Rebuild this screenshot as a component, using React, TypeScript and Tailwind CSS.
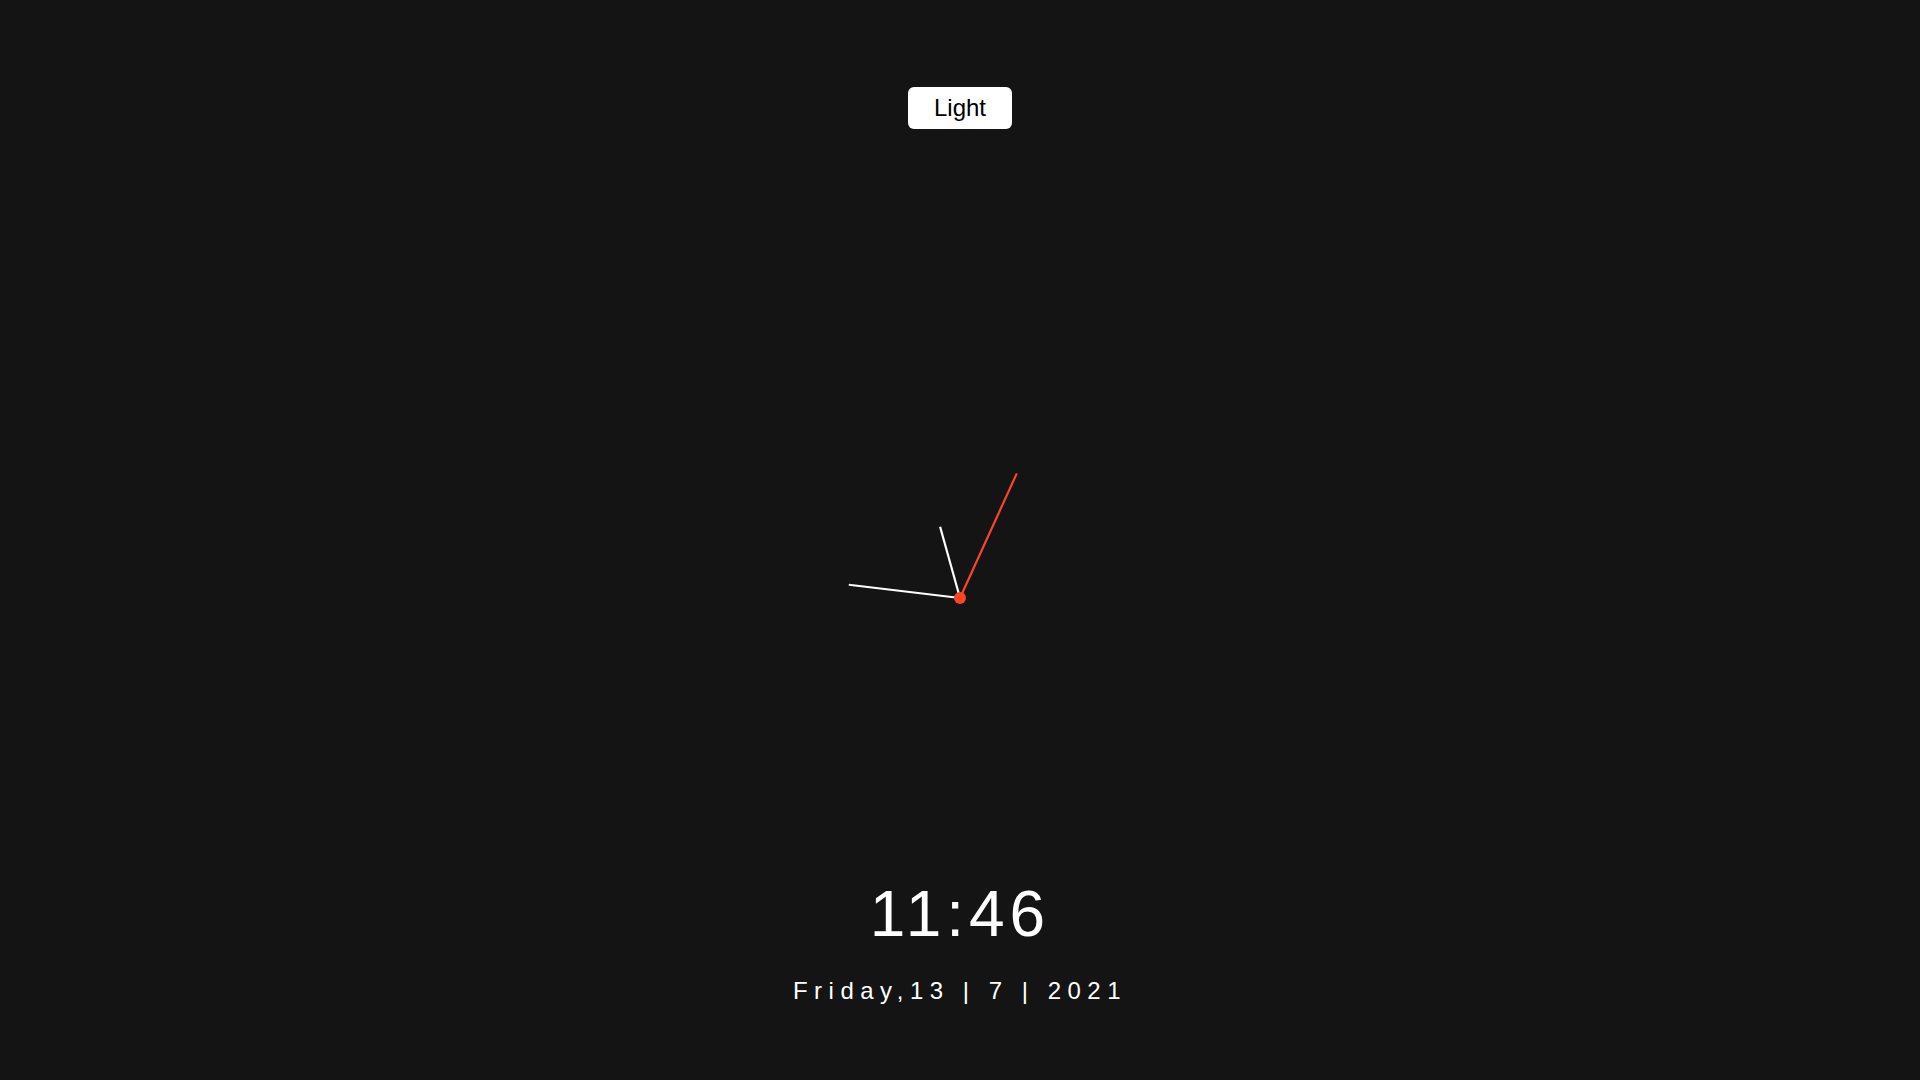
import { useState } from 'react'

const RED = '#fb4526'

// hand angles in degrees, measured clockwise from 12 o'clock
const hands = [
  { angle: 344.4, length: 74, color: '#ffffff' },
  { angle: 276.8, length: 112, color: '#ffffff' },
  { angle: 24.5, length: 137, color: RED },
]

const Clock = () => {
  const c = 150
  return (
    <svg width={300} height={300} viewBox="0 0 300 300" className="block">
      {hands.map((h, i) => {
        const rad = (h.angle * Math.PI) / 180
        const x = c + Math.sin(rad) * h.length
        const y = c - Math.cos(rad) * h.length
        return (
          <line
            key={i}
            x1={c}
            y1={c}
            x2={x}
            y2={y}
            stroke={h.color}
            strokeWidth={2.2}
          />
        )
      })}
      <circle cx={c} cy={c} r={6} fill={RED} />
    </svg>
  )
}

export default function App() {
  const [dark, setDark] = useState(true)

  return (
    <div
      className="min-h-screen w-full bg-[#141414] flex flex-col items-center"
      style={{ fontFamily: '"Liberation Sans", Arial, sans-serif' }}
    >
      {/* Theme toggle */}
      <button
        onClick={() => setDark(!dark)}
        className="mt-[87px] h-[42px] w-[104px] rounded-[6px] bg-white text-black text-[24px] leading-none flex items-center justify-center"
      >
        Light
      </button>

      {/* Analog clock */}
      <div className="mt-[319px]">
        <Clock />
      </div>

      {/* Digital time */}
      <div className="mt-[134px] text-white text-[64px] leading-none tracking-[5px]">
        11:46
      </div>

      {/* Date */}
      <div className="mt-[33px] text-white text-[24px] leading-none tracking-[6.5px]">
        Friday,13 | 7 | 2021
      </div>
    </div>
  )
}
